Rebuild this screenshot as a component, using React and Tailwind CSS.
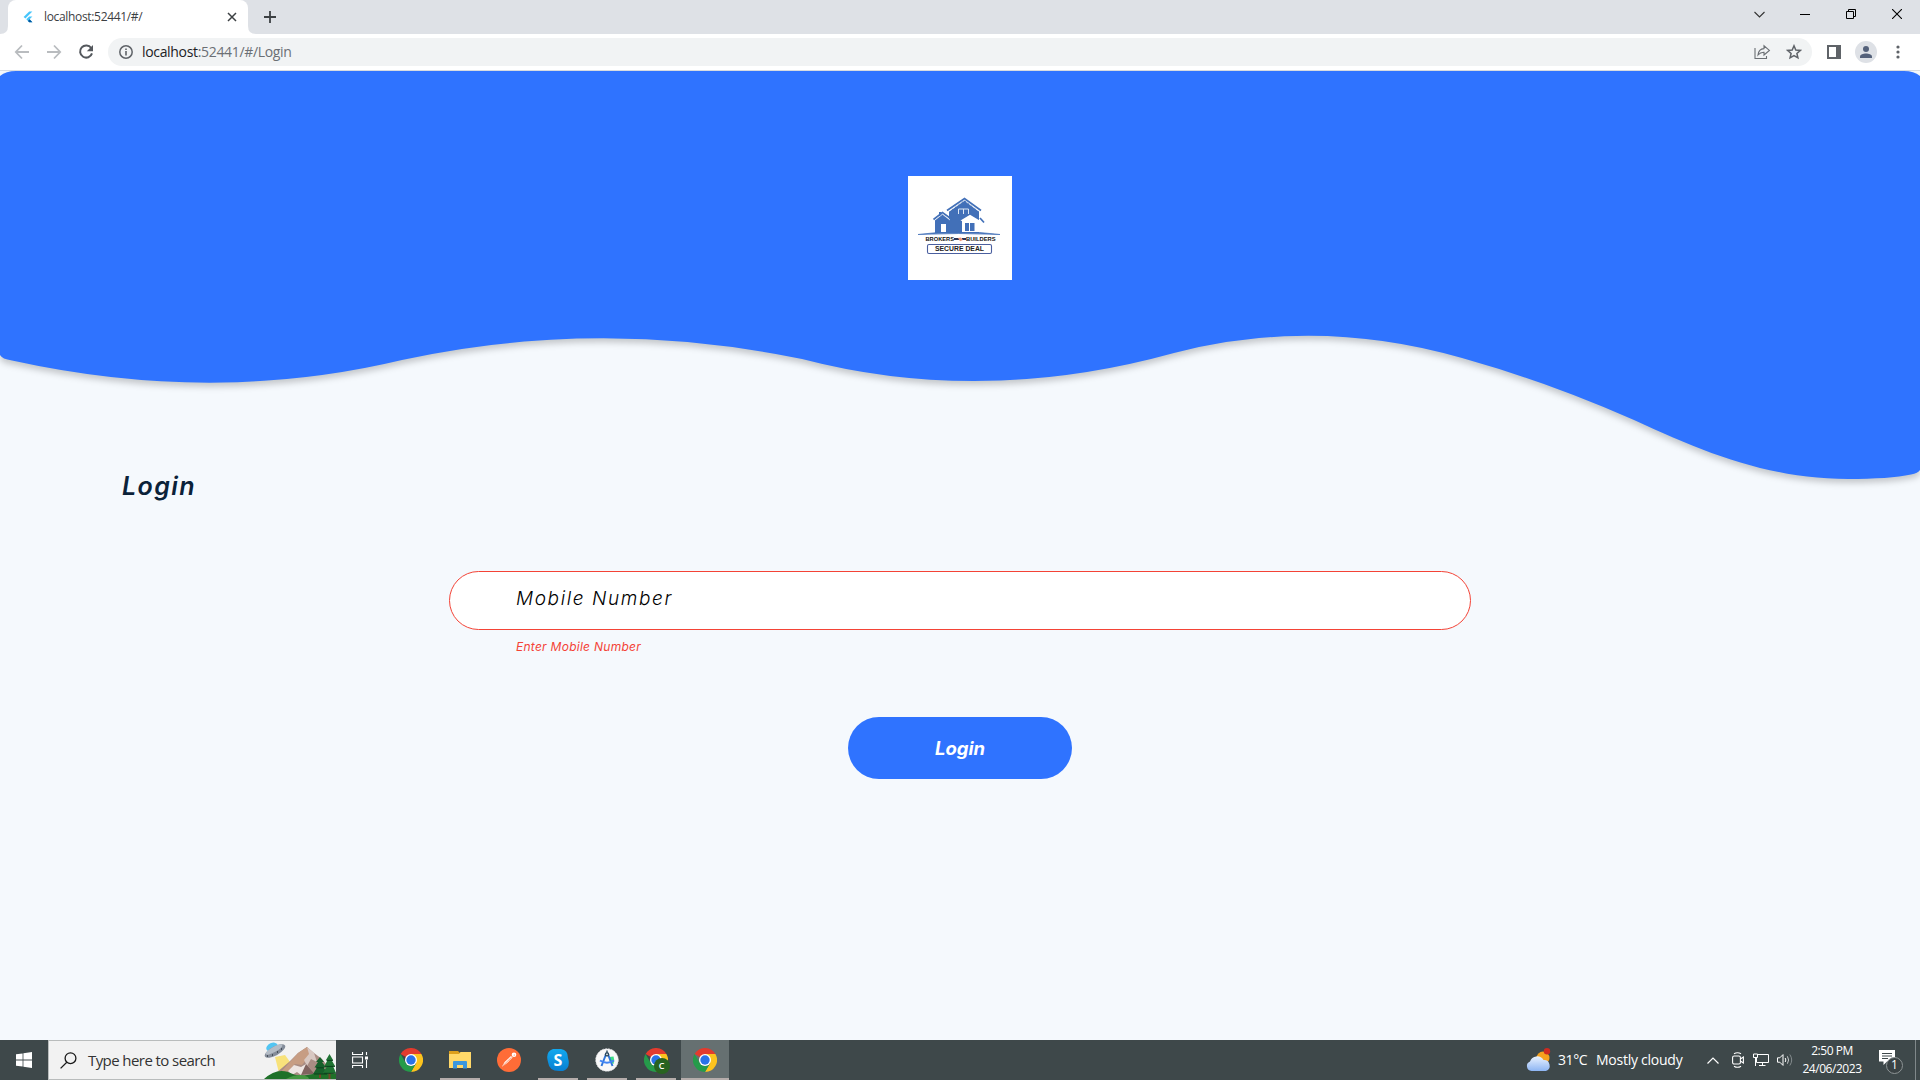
import React from "react";

const ui = "font-['Open_Sans','Noto_Sans',sans-serif]";
const geo = "font-['Inter',sans-serif]";

function Chrome({ size = 24 }) {
  return (
    <svg width={size} height={size} viewBox="0 0 48 48">
      <path d="M24 24 L3.2 12 A24 24 0 0 1 44.8 12 Z" fill="#e33b2e" />
      <path d="M24 12 H44.8 A24 24 0 0 1 24 48 L34.4 30 Z" fill="#fcc31e" />
      <path d="M3.2 12 L13.6 30 A12 12 0 0 0 34.4 30 L24 48 A24 24 0 0 1 3.2 12 Z" fill="#259b4a" />
      <circle cx="24" cy="24" r="12" fill="#fff" />
      <circle cx="24" cy="24" r="9.4" fill="#2a72e8" />
    </svg>
  );
}

function TabStrip() {
  return (
    <div className="flex h-[34px] shrink-0 bg-[#dee1e6]">
      <svg width="8" height="34" className="shrink-0"><path d="M8 26 V34 H0 Q8 34 8 26Z" fill="#fff" /></svg>
      <div className="flex h-[34px] w-[240px] shrink-0 items-center rounded-t-lg bg-white pl-[14px] pr-[11px]">
        <svg width="12" height="14" viewBox="0 0 12 14" className="mr-[10px]">
          <path d="M7.2 1.5 H10.4 L3.4 8.4 L1.6 6.9 Z" fill="#47c5fb" />
          <path d="M7.2 6.6 H10.4 L7.6 9.3 L10.4 12.2 H7.2 L4.3 9.3 Z" fill="#47c5fb" />
          <path d="M5.9 10.9 L7.6 9.3 L10.4 12.2 H7.2 Z" fill="#00569e" />
        </svg>
        <span className={`${ui} text-[12px] leading-4 tracking-[-0.33px] text-[#3c4043]`}>localhost:52441/#/</span>
        <svg width="10" height="10" viewBox="0 0 10 10" className="ml-auto" stroke="#3c4043" strokeWidth="1.5"><path d="M1 1 L9 9 M9 1 L1 9" /></svg>
      </div>
      <svg width="8" height="34" className="shrink-0"><path d="M0 26 V34 H8 Q0 34 0 26Z" fill="#fff" /></svg>
      <div className="flex w-[28px] items-center justify-center">
        <svg width="12" height="12" viewBox="0 0 12 12" stroke="#3c4043" strokeWidth="1.8"><path d="M6 0 V12 M0 6 H12" /></svg>
      </div>
      <div className="ml-auto flex h-[28px] text-[#111]">
        <div className="flex w-[46px] items-center justify-center"><svg width="11" height="7" viewBox="0 0 11 7" fill="none" stroke="#333" strokeWidth="1.1"><path d="M.5 1 L5.5 6 L10.5 1" /></svg></div>
        <div className="flex w-[46px] items-center justify-center"><div className="h-px w-[10px] bg-black" /></div>
        <div className="flex w-[46px] items-center justify-center"><svg width="10" height="10" viewBox="0 0 10 10" fill="none" stroke="#000"><path d="M.5 2.5 H7.5 V9.5 H.5 Z M2.5 2.5 V.5 H9.5 V7.5 H7.5" /></svg></div>
        <div className="flex w-[46px] items-center justify-center"><svg width="10" height="10" viewBox="0 0 10 10" stroke="#000" strokeWidth="1.1"><path d="M0 0 L10 10 M10 0 L0 10" /></svg></div>
      </div>
    </div>
  );
}

function Toolbar() {
  return (
    <div className="flex h-[37px] shrink-0 items-center border-b border-[#d9dce0] bg-white pl-[6px]">
      <div className="flex w-8 justify-center"><svg width="16" height="16" viewBox="0 0 16 16" fill="none" stroke="#b9bcbf" strokeWidth="1.8"><path d="M15 8 H2 M8 1.5 L1.8 8 L8 14.5" /></svg></div>
      <div className="flex w-8 justify-center"><svg width="16" height="16" viewBox="0 0 16 16" fill="none" stroke="#b9bcbf" strokeWidth="1.8"><path d="M1 8 H14 M8 1.5 L14.2 8 L8 14.5" /></svg></div>
      <div className="flex w-8 justify-center"><svg width="16" height="16" viewBox="0 0 16 16"><path d="M13.2 4 A6.1 6.1 0 1 0 14 9.4" fill="none" stroke="#54585d" strokeWidth="2" /><path d="M15 1 V7.2 H8.8 Z" fill="#54585d" /></svg></div>
      <div className="ml-[6px] flex h-7 w-[1704px] items-center rounded-full bg-[#f1f3f4] pl-[11px] pr-[10px]">
        <svg width="14" height="14" viewBox="0 0 14 14"><circle cx="7" cy="7" r="6.2" fill="none" stroke="#5f6368" strokeWidth="1.5" /><path d="M7 6 V10.4 M7 3.4 V5" stroke="#5f6368" strokeWidth="1.6" /></svg>
        <span className={`${ui} ml-[9px] text-[14px] leading-5 tracking-[-0.33px] text-[#202124]`}>localhost<span className="text-[#6b6f74]">:52441/#/Login</span></span>
        <div className="ml-auto flex items-center gap-[15px]">
          <svg width="17" height="16" viewBox="0 0 17 16" fill="none" stroke="#6b6f74" strokeWidth="1.1"><path d="M1 4 V14.5 H12.5 V12" /><path d="M4 11 C4.4 7 6.6 4.8 10 4.6 V1.8 L15.4 6.4 L10 11 V8.2 C7.4 8.1 5.6 9 4 11Z" /></svg>
          <svg width="16" height="16" viewBox="0 0 16 16" fill="none" stroke="#5f6368" strokeWidth="1.5"><path d="M8 1.8 L9.8 6 L14.3 6.4 L10.9 9.4 L11.9 13.8 L8 11.5 L4.1 13.8 L5.1 9.4 L1.7 6.4 L6.2 6 Z" /></svg>
        </div>
      </div>
      <div className="flex w-[44px] justify-center"><svg width="14" height="14" viewBox="0 0 14 14"><path d="M0 0 H14 V14 H0Z M2 2 V12 H9 V2Z" fill="#5f6368" fillRule="evenodd" /></svg></div>
      <div className="-ml-[1px] flex size-[22px] items-center justify-center rounded-full bg-[#dee1e6]"><svg width="14" height="14" viewBox="0 0 14 14" fill="#54617a"><circle cx="7" cy="4" r="3" /><path d="M1 13 V11.4 C1 9.4 4.4 8.4 7 8.4 S13 9.4 13 11.4 V13Z" /></svg></div>
      <div className="flex w-[42px] justify-center"><svg width="4" height="14" viewBox="0 0 4 14" fill="#5f6368"><circle cx="2" cy="2" r="1.6" /><circle cx="2" cy="7" r="1.6" /><circle cx="2" cy="12" r="1.6" /></svg></div>
    </div>
  );
}

function Logo() {
  return (
    <svg width="104" height="104" viewBox="0 0 104 104" className="relative mt-[105px] bg-white">
      <g fill="#4270b8">
        <path d="M41 35.5 L56.5 24 L71 35.5 V57 H41 Z" />
        <path d="M27 44 L34.5 38 L42 44 V57 H27Z" />
        <path d="M31 36 H33.5 V40 H31Z" />
        <path d="M10 58.5 Q50 53 92 58.5 Q50 56.5 10 58.5Z" stroke="#4270b8" strokeWidth=".7" />
      </g>
      <g fill="none" stroke="#4270b8" strokeWidth="1.7">
        <path d="M39 34.5 L56.5 22.5 L73 34.5" />
        <path d="M25.5 43.5 L34.5 36.5 L44 43.5" />
        <path d="M72 42 L76 46.5" />
      </g>
      <g fill="none" stroke="#fff" strokeWidth=".7"><path d="M41.5 35 L56.5 24.5 L70.5 35" strokeDasharray="3 1" /><path d="M27 44 L34.5 38.3 L42 44" /></g>
      <path d="M52.5 44.5 L62 38.8 L72.5 45 V56 H54 V45 Z" fill="#fff" />
      <path d="M57 47 H61 V55 H57Z M62 47 H66.5 V55 H62Z" fill="#4270b8" />
      <path d="M33 48 H38 V56 H33Z" fill="#fff" />
      <path d="M50.5 33 H60.5 V38 M50.5 33 V38 M55.5 33 V38" fill="none" stroke="#dbe5f3" strokeWidth="1" />
      <text x="17.5" y="65" textLength="28.5" lengthAdjust="spacingAndGlyphs" className="font-['Liberation_Sans',sans-serif] text-[5.2px] font-bold" fill="#111">BROKERS</text>
      <text x="58" y="65" textLength="29.5" lengthAdjust="spacingAndGlyphs" className="font-['Liberation_Sans',sans-serif] text-[5.2px] font-bold" fill="#111">BUILDERS</text>
      <path d="M46 63 H51 M54 63 H58" stroke="#2b3454" strokeWidth="2" />
      <path d="M50 62 L53 61.5 L55 64 L52 65.2Z" fill="#ee9678" />
      <rect x="19.5" y="68.5" width="64" height="9" rx="1.5" fill="none" stroke="#4a5f9f" strokeWidth="1.1" />
      <text x="27" y="75.4" textLength="49" lengthAdjust="spacingAndGlyphs" className="font-['Liberation_Sans',sans-serif] text-[6.6px] font-bold" fill="#222">SECURE DEAL</text>
    </svg>
  );
}

function Page() {
  return (
    <main className="relative flex h-[969px] shrink-0 flex-col items-center overflow-hidden bg-[#f5f9fd]">
      <svg width="1920" height="430" viewBox="0 71 1920 430" className="absolute left-0 top-0 drop-shadow-[0_4px_3px_rgba(0,0,0,0.2)]">
        <path fill="#2f73ff" d="M16 71 H1904 Q1914 71 1920 76 V470 Q1918 473 1911 474.5 C1897 477.5 1875 479 1848 479 C1770 479 1705 453 1634 420 Q1545 381 1462 358 Q1317 316 1174 353 Q982 406 802 359 Q600 317 402 360 Q214 405 12 360.5 Q2 359 0 355 V76 Q6 71 16 71Z" />
      </svg>
      <Logo />
      <h1 className={`${geo} relative ml-[122px] mt-[188px] self-start text-[25px] font-semibold italic leading-[36px] tracking-[1.45px] text-[#0b2239]`}>Login</h1>
      <div className="mt-[67px] flex h-[59px] w-[1022px] items-center rounded-full border border-[#f44336] bg-white pb-[4px] pl-[66px]">
        <span className={`${geo} text-[19px] font-light italic leading-7 tracking-[1.6px] text-black`}>Mobile Number</span>
      </div>
      <p className={`${geo} ml-[516px] mt-[8px] self-start text-[12px] italic leading-[18px] tracking-[0.27px] text-[#f44336]`}>Enter Mobile Number</p>
      <button className={`${geo} mt-[61px] h-[62px] w-[224px] rounded-full bg-[#2f73ff] pt-[1px] text-[18.5px] font-bold italic text-white`}>Login</button>
    </main>
  );
}

function TaskButton({ children, running, active }) {
  return (
    <div className={`flex h-10 flex-col items-center ${active ? "ml-px w-12 bg-[#667071]" : "w-[49px]"}`}>
      <div className="flex h-[38px] items-center pt-[2px]">{children}</div>
      {running && <div className={`h-[2px] bg-[#b5adab] ${active ? "w-12" : "w-10"}`} />}
    </div>
  );
}

function Scenery() {
  return (
    <svg width="72" height="37" viewBox="0 0 72 37" className="ml-auto shrink-0 self-end">
      <path d="M11 15 L21 13 L29 24 L15 31Z" fill="#f8e27b" />
      <path d="M12 31 L25 20 L34 11 L43 5 L50 11 L58 17 L70 32 L66 37 H12Z" fill="#a98c83" />
      <path d="M34 11 L43 5 L48 10 L44 16 L38 23 L31 22 L24 29 L15 32 L25 21Z" fill="#c79d83" />
      <path d="M43 5 L50 11 L53 20 L47 17 L43 24 L40 18 L45 12Z" fill="#d8c8c2" />
      <path d="M24 29 L30 23 L37 25 L42 22 L51 32 L37 33 L33 30 L28 33Z" fill="#eee5e2" />
      <path d="M37 33 L42 22 L51 32Z" fill="#80635f" />
      <path d="M0 37 Q12 26 24 30 Q34 35 43 33 Q55 30 72 32 V37Z" fill="#1f7129" />
      <path d="M22 37 Q35 30 44 35 L45 37Z" fill="#459841" />
      <ellipse cx="8" cy="5" rx="6" ry="4" transform="rotate(-24 8 5)" fill="#52c5f2" />
      <ellipse cx="11" cy="9" rx="11.5" ry="4.5" transform="rotate(-29 11 9)" fill="#848c99" />
      <ellipse cx="10" cy="7.5" rx="9.5" ry="2.7" transform="rotate(-29 10 7.5)" fill="#b4bcc6" />
      <path d="M3 14h1M8 13h1M13 10h1M17 7h1" stroke="#333c47" strokeWidth="1.5" />
      <path d="M56 24 V36 M65.5 22 V37" stroke="#754629" strokeWidth="2" />
      <path d="M56 15 L60 20 H58 L62 25.5 H59.5 L64 32 H49 L53 25.5 H50.5 L54 20 H52Z" fill="#17602b" />
      <path d="M65.5 12 L69 18 H67.5 L71 24 H69 L72 31 H59 L63 24 H60.5 L63.5 18 H62Z" fill="#207333" />
      <path d="M52 25.8 H60 M50 32 H63 M62.5 18.4 H69 M61 24.4 H71 M60 31.3 H72" stroke="#0d401d" strokeWidth="1" />
    </svg>
  );
}

function Taskbar() {
  return (
    <footer className="flex h-10 shrink-0 bg-[#3e484a] text-white">
      <div className="flex w-12 items-center justify-center">
        <svg width="16" height="16" viewBox="0 0 16 16" fill="#fff"><path d="M0 2.3 L6.6 1.4 V7.6 H0Z M7.4 1.3 L16 0 V7.6 H7.4Z M0 8.4 H6.6 V14.6 L0 13.7Z M7.4 8.4 H16 V16 L7.4 14.7Z" /></svg>
      </div>
      <div className="flex w-[288px] items-center border border-r-0 border-[#b9bcbc] bg-[#f2f2f2] pl-[11px]">
        <svg width="17" height="17" viewBox="0 0 17 17" fill="none" stroke="#1a1a1a" strokeWidth="1.3"><circle cx="10.5" cy="6.2" r="5.4" /><path d="M6.8 10.2 L.6 16.4" /></svg>
        <span className={`${ui} ml-[11px] whitespace-nowrap text-[15px] leading-5 tracking-[-0.58px] text-[#333]`}>Type here to search</span>
        <Scenery />
      </div>
      <div className="flex w-[48px] items-center justify-center">
        <svg width="16" height="16" viewBox="0 0 16 16" fill="none" stroke="#fff" strokeWidth="1.1"><path d="M.6 0 V2.5 H10.5 V0 M.6 16 V13.5 H10.5 V16 M.6 5 H10.5 V11 H.6Z M14.5 0 V3 M14.5 8 V16" /><path d="M13 4.5 H16 V7.5 H13Z" fill="#fff" stroke="none" /></svg>
      </div>
      <div className="ml-[2px] flex">
        <TaskButton><Chrome /></TaskButton>
        <TaskButton running>
          <svg width="22" height="18" viewBox="0 0 22 18"><path d="M0 0 H9 L11 2 V5 H0Z" fill="#dc9f1c" /><path d="M0 3 H10 L11.5 1 H22 V17 H0Z" fill="#ffd869" /><path d="M4 17.5 V11 Q4 10 5 10 H17 Q18 10 18 11 V17.5 H14 V14 H8 V17.5Z" fill="#3b97dd" /></svg>
        </TaskButton>
        <TaskButton>
          <svg width="24" height="24" viewBox="0 0 24 24"><circle cx="12" cy="12" r="12" fill="#ff6c37" /><path d="M5 18.8 L7.6 14 L14 8 L15.6 9.6 L9.5 15.6Z" fill="#fff" /><circle cx="17" cy="6.8" r="2.3" fill="#fff" /><path d="M6 17.6 L14.5 9.3 M16.6 7.2 L18 7" stroke="#ff6c37" strokeWidth=".7" /></svg>
        </TaskButton>
        <TaskButton running>
          <svg width="22" height="22" viewBox="0 0 22 22"><defs><linearGradient id="sk" x2="0" y2="1"><stop stopColor="#12a9ee" /><stop offset="1" stopColor="#087fd2" /></linearGradient></defs><path d="M6 0 H14 Q21 1 21 9 Q24 19 16 22 H12 Q2 22 1 13 Q-2 3 6 0Z" fill="url(#sk)" /><text x="11" y="16.6" textAnchor="middle" fill="#fff" className="font-['Open_Sans',sans-serif] text-[16px] font-bold">S</text></svg>
        </TaskButton>
        <TaskButton running>
          <svg width="24" height="24" viewBox="0 0 24 24"><circle cx="12" cy="12" r="11.3" fill="#f8f8f8" stroke="#dfe1e2" strokeWidth=".7" strokeDasharray="2 1" /><path d="M14 9 L18.5 8.5 Q20 12 18.5 16 L15 14Z" fill="#3ddc84" /><path d="M11.5 5 L6.5 18 M12.5 5 L17.5 18" stroke="#2f75d8" strokeWidth="2" /><path d="M5 12.5 Q12 17 19 12.5" fill="none" stroke="#4285f4" strokeWidth="2" /><path d="M12 2.5 V6" stroke="#28465b" strokeWidth="1.4" /><circle cx="12" cy="6.4" r="2.2" fill="#28465b" /><circle cx="12" cy="6.4" r=".8" fill="#fff" /></svg>
        </TaskButton>
        <TaskButton running>
          <div className="relative h-6 w-6"><Chrome /><div className={`${ui} absolute left-[10px] top-[10px] flex size-4 items-center justify-center rounded-full bg-[#286320] text-[9px] font-semibold text-white`}>C</div></div>
        </TaskButton>
        <TaskButton running active><Chrome /></TaskButton>
      </div>
      <div className="ml-auto flex items-center">
        <svg width="25" height="24" viewBox="0 0 25 24"><defs><linearGradient id="cl" x2="0" y2="1"><stop stopColor="#e9f2ff" /><stop offset="1" stopColor="#8db5f3" /></linearGradient></defs><circle cx="17" cy="10" r="6.5" fill="#f6a11d" /><circle cx="21" cy="3.2" r="3.2" fill="#cc2a20" /><path d="M5.5 23 A5 5 0 0 1 4 13.4 A7.5 7.5 0 0 1 17.5 12 A5.7 5.7 0 0 1 20 23Z" fill="url(#cl)" /></svg>
        <span className={`${ui} ml-[7px] w-[38px] whitespace-nowrap text-[14px] leading-5 tracking-[-0.4px]`}>31°C</span>
        <span className={`${ui} w-[88px] whitespace-nowrap text-[14px] leading-5 tracking-[-0.25px]`}>Mostly cloudy</span>
        <svg width="12" height="7" viewBox="0 0 12 7" fill="none" stroke="#fff" strokeWidth="1.2" className="ml-[23px]"><path d="M.5 6.5 L6 1 L11.5 6.5" /></svg>
        <svg width="12" height="16" viewBox="0 0 12 16" fill="none" stroke="#fff" strokeWidth="1.1" className="ml-[13px]"><rect x=".6" y="4" width="7.8" height="8" rx="1.5" /><path d="M8.4 7 L11.4 5 V11 L8.4 9 M2 1.8 Q5.5 -.4 9 1.8 M2 14.2 Q5.5 16.4 9 14.2" /></svg>
        <svg width="16" height="14" viewBox="0 0 16 14" fill="none" stroke="#fff" strokeWidth="1" className="ml-[9px]"><path d="M4.5 1.5 H15.5 V9.5 H3.5 V5 M9.5 9.5 V12.5 M6 12.5 H12.5 M.5 1 H4.5 V4.5 H.5Z M2.5 4.5 V13" /></svg>
        <svg width="17" height="14" viewBox="0 0 17 14" fill="none" stroke="#fff" strokeWidth="1" className="ml-[8px]"><path d="M.5 4.8 H2.8 L6 1.6 V12.4 L2.8 9.2 H.5Z M8.2 5 Q9.5 7 8.2 9" /><path d="M10.4 3.3 Q12.8 7 10.4 10.7" stroke="#c5c9ca" /><path d="M12.8 1.5 Q16.6 7 12.8 12.5" stroke="#858c8e" /></svg>
        <div className={`${ui} ml-[6px] flex w-[64px] flex-col items-center whitespace-nowrap text-[12px] leading-[18px] tracking-[-0.45px]`}>
          <span>2:50 PM</span><span>24/06/2023</span>
        </div>
        <div className="relative ml-[15px] mt-[3px] h-6 w-6">
          <svg width="16" height="15" viewBox="0 0 16 15"><path d="M0 0 H16 V11.5 H8 L4.5 15 V11.5 H0Z" fill="#fff" /><path d="M3 3.5 H13 M3 6 H13 M3 8.5 H9" stroke="#3e484a" /></svg>
          <div className={`${ui} absolute left-[7px] top-[7px] flex size-[17px] items-center justify-center rounded-full border border-[#8e9596] bg-[#3a4244] text-[12px] leading-none`}>1</div>
        </div>
        <div className="ml-[12px] mr-1 h-10 w-px bg-[#80888a]" />
      </div>
    </footer>
  );
}

export default function App() {
  return (
    <div className="flex h-[1080px] w-[1920px] flex-col overflow-hidden">
      <TabStrip />
      <Toolbar />
      <Page />
      <Taskbar />
    </div>
  );
}
